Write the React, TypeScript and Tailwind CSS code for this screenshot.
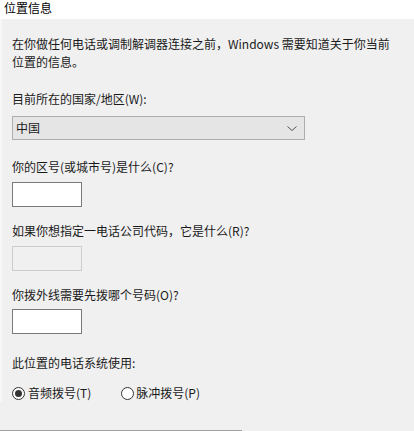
import { useState } from "react";

const font = { fontFamily: '"Noto Sans CJK SC", "Noto Sans", sans-serif' };

export default function App() {
  const [dial, setDial] = useState<"tone" | "pulse">("tone");

  return (
    <div className="w-[414px] h-[431px] overflow-hidden bg-[#f0f0f0] text-[12px] leading-[18px] text-[#1a1a1a]" style={font}>
      {/* Title bar */}
      <div className="h-[19px] bg-white px-[4px] text-[12px] leading-[15px] text-black">位置信息</div>

      <div className="flex flex-col border-l-2 border-[#f7f7f7] pl-[10px]">
        <p className="mt-[16px]">
          在你做任何电话或调制解调器连接之前，Windows 需要知道关于你当前
          <br />
          位置的信息。
        </p>

        {/* Country */}
        <label className="mt-[19px]">目前所在的国家/地区(W):</label>
        <div className="mt-[8px] flex h-[24px] w-[293px] items-center justify-between border border-[#adadad] bg-[#e5e5e5] pl-[3px] pr-[7px]">
          <span>中国</span>
          <svg width="10" height="5" viewBox="0 0 10 5" className="text-[#555]">
            <path d="M0.5 0.5 L5 4.5 L9.5 0.5" fill="none" stroke="currentColor" strokeWidth="1" />
          </svg>
        </div>

        {/* Area code */}
        <label className="mt-[18px]">你的区号(或城市号)是什么(C)?</label>
        <div className="mt-[6px] h-[25px] w-[70px] border border-[#7a7a7a] bg-white" />

        {/* Carrier code */}
        <label className="mt-[15px]">如果你想指定一电话公司代码，它是什么(R)?</label>
        <div className="mt-[6px] h-[25px] w-[70px] border border-[#cccccc] bg-[#f0f0f0]" />

        {/* Outside line */}
        <label className="mt-[15px]">你拨外线需要先拨哪个号码(O)?</label>
        <div className="mt-[5px] h-[25px] w-[70px] border border-[#7a7a7a] bg-white" />

        {/* Dialing */}
        <label className="mt-[20px]">此位置的电话系统使用:</label>
        <div className="mt-[12px] flex h-[18px] items-center">
          <button className="flex items-center gap-[3px]" onClick={() => setDial("tone")}>
            <span className="flex h-[13px] w-[13px] items-center justify-center rounded-full border border-[#333] bg-white">
              {dial === "tone" && <span className="h-[7px] w-[7px] rounded-full bg-[#333]" />}
            </span>
            <span>音频拨号(T)</span>
          </button>
          <button className="ml-[30px] flex items-center gap-[2px]" onClick={() => setDial("pulse")}>
            <span className="flex h-[13px] w-[13px] items-center justify-center rounded-full border border-[#333] bg-white">
              {dial === "pulse" && <span className="h-[7px] w-[7px] rounded-full bg-[#333]" />}
            </span>
            <span>脉冲拨号(P)</span>
          </button>
        </div>
      </div>

      <div className="mt-[28px] h-px w-[242px] bg-[#a0a0a0]" />
    </div>
  );
}
